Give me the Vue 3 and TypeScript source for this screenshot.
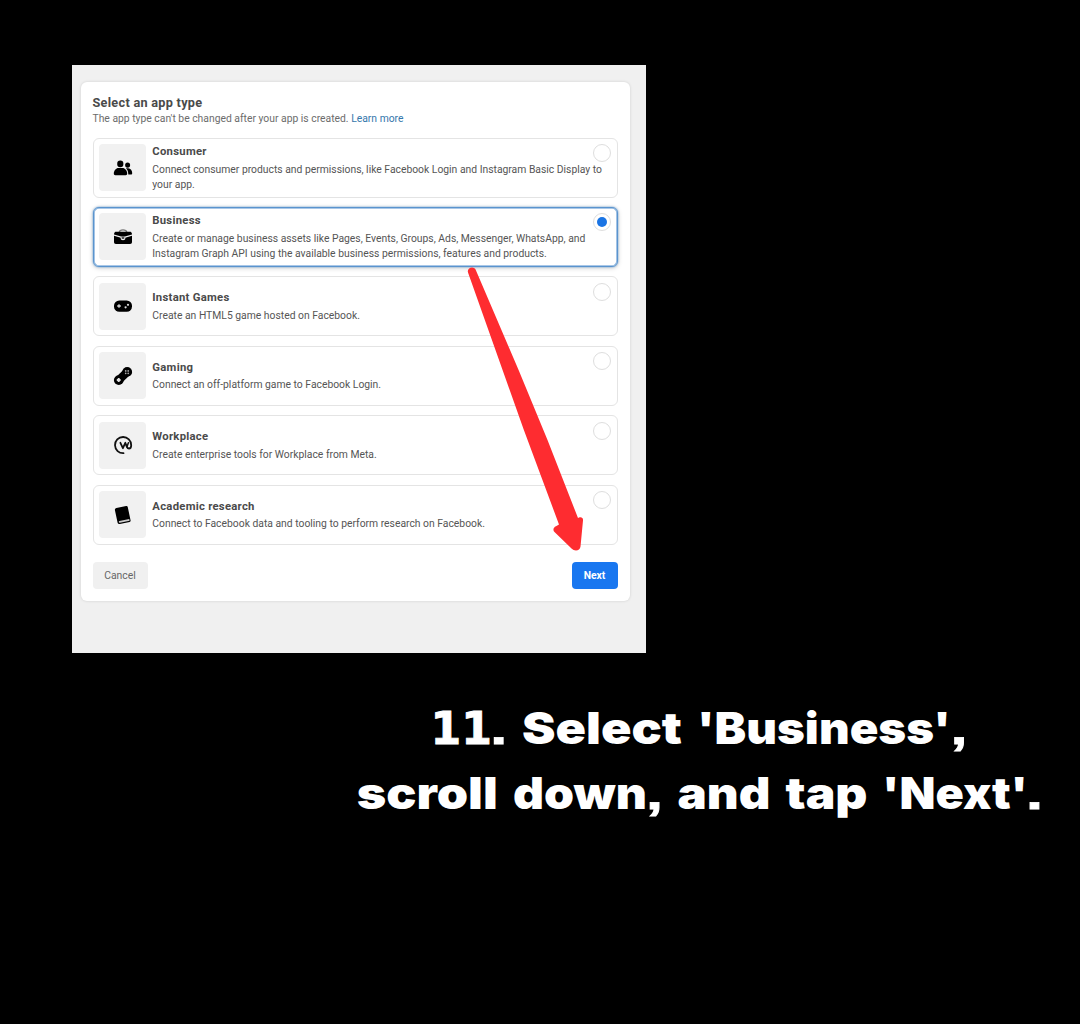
<script setup lang="ts">
interface AppType {
  id: string
  title: string
  lines: string[]
}

interface Word {
  text: string
  x: number
  y: number
  width: number
  kind?: 'digits' | 'stop'
}

const selected = 'business'

const types: AppType[] = [
  {
    id: 'consumer',
    title: 'Consumer',
    lines: ['Connect consumer products and permissions, like Facebook Login and Instagram Basic Display to', 'your app.'],
  },
  {
    id: 'business',
    title: 'Business',
    lines: [
      'Create or manage business assets like Pages, Events, Groups, Ads, Messenger, WhatsApp, and',
      'Instagram Graph API using the available business permissions, features and products.',
    ],
  },
  { id: 'instant', title: 'Instant Games', lines: ['Create an HTML5 game hosted on Facebook.'] },
  { id: 'gaming', title: 'Gaming', lines: ['Connect an off-platform game to Facebook Login.'] },
  { id: 'workplace', title: 'Workplace', lines: ['Create enterprise tools for Workplace from Meta.'] },
  { id: 'research', title: 'Academic research', lines: ['Connect to Facebook data and tooling to perform research on Facebook.'] },
]

const words: Word[] = [
  { text: '11', x: 80.5, y: 47, width: 61.5, kind: 'digits' },
  { text: '.', x: 140.3, y: 47, width: 17, kind: 'stop' },
  { text: 'Select', x: 172, y: 47, width: 160 },
  { text: "'Business'", x: 347, y: 47, width: 254 },
  { text: ',', x: 600.5, y: 47, width: 17, kind: 'stop' },
  { text: 'scroll', x: 6.8, y: 112, width: 141 },
  { text: 'down', x: 163, y: 112, width: 134 },
  { text: ',', x: 296, y: 112, width: 17, kind: 'stop' },
  { text: 'and', x: 327.5, y: 112, width: 93 },
  { text: 'tap', x: 435.5, y: 112, width: 82 },
  { text: "'Next'", x: 532, y: 112, width: 146 },
  { text: '.', x: 676, y: 112, width: 17, kind: 'stop' },
]
</script>

<template>
  <main class="slide">
    <section class="shot">
      <div class="card">
        <h1 class="heading">Select an app type</h1>
        <p class="sub">The app type can't be changed after your app is created. <a class="link">Learn more</a></p>

        <div class="options">
          <div v-for="t in types" :key="t.id" class="option" :class="{ active: t.id === selected }">
            <div class="tile">
              <svg v-if="t.id === 'consumer'" class="icon" viewBox="0 0 20 20">
                <ellipse cx="7.300" cy="5.900" rx="3.100" ry="3.300" />
                <path d="M2.300 17.200C1.300 17.200.8 16.600.8 15.600C.8 12.400 3 9.900 5.600 9.900H9.400C12 9.900 14.200 12.400 14.200 15.600C14.200 16.600 13.700 17.200 12.700 17.200Z" />
                <ellipse cx="14.600" cy="7.100" rx="2.500" ry="2.700" />
                <path d="M12.900 10.200H15.300C17.600 10.200 19.200 12.400 19.200 14.900C19.200 15.900 18.800 16.400 18 16.400H15.300C15.300 13.700 14.500 11.600 12.900 10.200Z" />
              </svg>
              <svg v-else-if="t.id === 'business'" class="icon" viewBox="0 0 20 20">
                <path d="M6.200 5C6.600 3.300 7.700 2.900 10 2.900s3.400.4 3.800 2.100" fill="none" stroke="#777" stroke-width="1.300" />
                <path d="M3 4.700h14c1 0 1.600.6 1.800 1.500l.2 1.200L11.800 9.400H8.200L1 7.400l.2-1.200C1.400 5.300 2 4.700 3 4.700z" />
                <path d="M1 8.700l6.700 2v.9c0 1 .9 1.700 2.300 1.700s2.300-.7 2.300-1.700v-.9l6.700-2v6.400c0 1.200-.7 1.900-1.900 1.900H2.900C1.700 17 1 16.300 1 15.100z" />
                <rect x="8.700" y="9.600" width="2.600" height="2.500" rx=".7" fill="#555" />
              </svg>
              <svg v-else-if="t.id === 'instant'" class="icon" viewBox="0 0 20 20">
                <rect x="1" y="4.500" width="18" height="11.200" rx="5.300" />
                <path d="M4.200 10h3.600M6 8.200v3.600" stroke="#ddd" stroke-width="1.300" />
                <circle cx="12.600" cy="11.300" r="1.100" fill="#ddd" /><circle cx="15" cy="8.800" r="1.100" fill="#ddd" />
              </svg>
              <svg v-else-if="t.id === 'gaming'" class="icon" viewBox="0 0 20 20">
                <path d="M14.200 5.800L5.800 14.200" stroke="#000" stroke-width="8.200" />
                <circle cx="14.200" cy="5.900" r="4.900" /><circle cx="5.800" cy="14.100" r="4.900" />
                <g fill="#aaa">
                  <circle cx="12.700" cy="4.900" r=".85" /><circle cx="15.200" cy="4.900" r=".85" />
                  <circle cx="12.700" cy="7.300" r=".85" /><circle cx="15.200" cy="7.300" r=".85" />
                </g>
                <path d="M5.700 12.100v3.800M3.800 14h3.800" stroke="#e0e0e0" stroke-width="1.900" />
              </svg>
              <svg v-else-if="t.id === 'workplace'" class="icon" viewBox="0 0 20 20" fill="none" stroke="#111" stroke-linecap="round" stroke-linejoin="round">
                <path d="M10.500 18.200A8.100 8.100 0 1 1 18.200 10.200C18.200 12.400 17.300 13.500 16 13.500C14.900 13.500 14.300 12.900 13.900 11.900L12.300 7.800L9.900 13.200L7.400 7.800" stroke-width="1.800" />
                <path d="M13.900 11.900L15.400 7.800" stroke-width="1.500" />
              </svg>
              <svg v-else class="icon" viewBox="0 0 20 20">
                <g transform="rotate(-12 10 10)">
                  <path d="M5 1.800h10c.8 0 1.300.5 1.300 1.300v13.800c0 .8-.5 1.300-1.300 1.300H5c-1.100 0-1.900-.8-1.900-1.900V3.700c0-1.100.8-1.900 1.900-1.900z" />
                  <path d="M5.300 15.100h10v1.800h-10c-1.100 0-1.100-1.800 0-1.800z" fill="#ccc" />
                </g>
              </svg>
            </div>
            <div class="copy">
              <h2 class="title">{{ t.title }}</h2>
              <p v-for="line in t.lines" :key="line" class="line">{{ line }}</p>
            </div>
            <span class="radio"><i v-if="t.id === selected" class="dot"></i></span>
          </div>
        </div>

        <div class="actions">
          <button class="btn cancel">Cancel</button>
          <button class="btn next">Next</button>
        </div>
      </div>
      <svg class="arrow" viewBox="0 0 574 588">
        <path
          d="M396 207.500C394.500 202.500 402.500 200.500 404 205.500L447 306L475.500 375L506 453L507 452.500C509.500 451.600 511.300 453 511 455.500L508.500 481.500C508 486 502.500 486.500 499.500 483.500L482.500 467C480.500 465 481.500 462.300 484 461.300L487 459.500L451.500 364Z"
          fill="#fe2c30"
        />
      </svg>
    </section>

    <svg class="caption" viewBox="0 0 700 140">
      <text
        v-for="w in words"
        :key="w.x"
        :class="w.kind"
        :x="w.x"
        :y="w.y"
        :textLength="w.width"
        lengthAdjust="spacingAndGlyphs"
      >{{ w.text }}</text>
    </svg>
  </main>
</template>

<style>
body { background: #000; }
</style>

<style scoped>
* { box-sizing: border-box; }
h1, h2, p { margin: 0; }
.slide {
  width: 1080px;
  height: 1024px;
  padding: 65px 0 0 72px;
  background: #000;
  overflow: hidden;
  font-family: Roboto, "Liberation Sans", sans-serif;
}
.shot {
  position: relative;
  width: 574px;
  height: 588px;
  padding: 16.500px 0 0 8.500px;
  background: #f0f0f0;
}
.card {
  width: 549px;
  height: 519.500px;
  padding: 12px 12px 0 12px;
  border-radius: 6px;
  background: #fff;
  box-shadow: 0 0 3px rgba(0, 0, 0, .14);
}
.heading {
  height: 17px;
  color: #4a4a4a;
  font-size: 12.700px;
  letter-spacing: .28px;
  line-height: 17px;
  font-weight: 700;
  white-space: nowrap;
}
.sub {
  height: 15px;
  color: #6c6c6c;
  font-size: 10.350px;
  line-height: 15px;
  white-space: nowrap;
}
.link { color: #3578ac; }
.options {
  display: flex;
  flex-direction: column;
  gap: 9.450px;
  margin-top: 12px;
}
.option {
  display: flex;
  align-items: center;
  width: 525px;
  height: 60px;
  padding: 0 5px;
  border: 1px solid #e4e4e4;
  border-radius: 6px;
  background: #fff;
}
.option.active {
  border-color: #5a94ce;
  box-shadow: inset 0 0 0 .8px #8db5df, 0 0 2px #5a94ce, 0 1px 5px rgba(0, 0, 0, .2);
}
.tile {
  display: flex;
  flex: none;
  align-items: center;
  justify-content: center;
  width: 47px;
  height: 47px;
  border-radius: 4px;
  background: #f1f1f1;
}
.icon { width: 20px; height: 20px; margin-left: 1px; }
.copy {
  flex: 1;
  min-width: 0;
  margin-left: 6.800px;
  color: #555;
}
.title {
  position: relative;
  top: .4px;
  color: #4a4a4a;
  font-size: 11.300px;
  letter-spacing: .27px;
  line-height: 16px;
  font-weight: 700;
  margin-bottom: 2px;
}
.line {
  font-size: 10.350px;
  line-height: 15px;
  white-space: nowrap;
}
.radio {
  display: flex;
  flex: none;
  align-self: flex-start;
  align-items: center;
  justify-content: center;
  width: 18px;
  height: 18px;
  margin: 5.500px .7px 0 -18.700px;
  border: 1px solid #dedede;
  border-radius: 50%;
}
.dot {
  width: 10px;
  height: 10px;
  border-radius: 50%;
  background: #1a74e4;
}
.actions {
  display: flex;
  justify-content: space-between;
  width: 525px;
  margin-top: 17.500px;
}
.btn {
  height: 27px;
  padding: 0;
  border: 0;
  border-radius: 4px;
  font-family: inherit;
  font-size: 10.400px;
}
.cancel { width: 55px; background: #f0f0f0; color: #666; }
.next { width: 46px; background: #1977f0; color: #fff; font-weight: 700; }
.arrow {
  position: absolute;
  inset: 0;
  width: 574px;
  height: 588px;
}
.caption {
  display: block;
  width: 700px;
  height: 140px;
  margin: 44px 0 0 278px;
  fill: #fff;
  font-family: Inter, "Liberation Sans", sans-serif;
  font-size: 44px;
  font-weight: 900;
}
.digits {
  font-family: "DejaVu Sans", sans-serif;
  font-weight: 700;
  stroke: #fff;
  stroke-width: .8px;
}
.stop {
  font-family: "Liberation Sans", Arial, sans-serif;
  font-weight: 700;
  stroke: #fff;
  stroke-width: .8px;
}
</style>
